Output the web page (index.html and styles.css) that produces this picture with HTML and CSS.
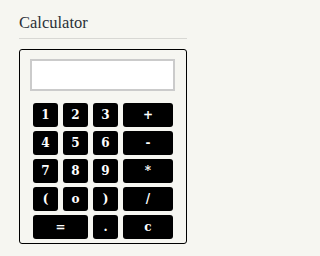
FILE: index.html
```html
<!DOCTYPE html>
<html>
<head>
<meta charset="utf-8">
<link rel="stylesheet" href="styles.css">
</head>
<body>
<div class="widget">
  <h2 class="title">Calculator</h2>
  <div class="calc">
    <input class="display" type="text">
    <div class="keys">
      <button class="key">1</button>
      <button class="key">2</button>
      <button class="key">3</button>
      <button class="key">+</button>
      <button class="key">4</button>
      <button class="key">5</button>
      <button class="key">6</button>
      <button class="key">-</button>
      <button class="key">7</button>
      <button class="key">8</button>
      <button class="key">9</button>
      <button class="key">*</button>
      <button class="key">(</button>
      <button class="key">o</button>
      <button class="key">)</button>
      <button class="key">/</button>
      <button class="key wide">=</button>
      <button class="key">.</button>
      <button class="key">c</button>
    </div>
  </div>
</div>
</body>
</html>
```
FILE: styles.css
```css
html, body {
  margin: 0;
  padding: 0;
  background: #f6f6f1;
}
.widget {
  width: 168px;
  margin-left: 19px;
}
.title {
  margin: 0;
  padding: 13px 0 5px;
  font-family: "Liberation Serif", serif;
  font-weight: normal;
  font-size: 16.5px;
  line-height: 20px;
  color: #2b3038;
  border-bottom: 1px solid #d8d8d4;
}
.calc {
  margin-top: 10px;
  border: 1px solid #000;
  border-radius: 3px;
  padding: 9px 10px 4px;
  width: 146px;
}
.display {
  display: block;
  box-sizing: border-box;
  width: 145px;
  height: 32px;
  margin: 0;
  padding: 0;
  border: 2px solid #cbcbcb;
  background: #fff;
}
.keys {
  display: grid;
  grid-template-columns: 25px 25px 25px 50px;
  grid-auto-rows: 24px;
  column-gap: 5px;
  row-gap: 4px;
  margin: 12px 0 0 3px;
}
.key {
  margin: 0;
  padding: 0;
  border: none;
  border-radius: 3px;
  background: #000;
  color: #fff;
  font-family: "DejaVu Serif", serif;
  font-weight: bold;
  font-size: 12px;
  line-height: 24px;
}
.wide {
  grid-column: span 2;
}
```
